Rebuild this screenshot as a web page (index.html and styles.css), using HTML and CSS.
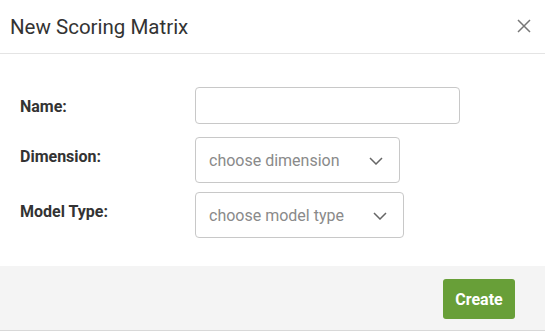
FILE: index.html
```html
<!DOCTYPE html>
<html>
<head>
<meta charset="utf-8">
<link rel="stylesheet" href="styles.css">
</head>
<body>
<div class="dialog">
  <div class="dialog-header">
    <h1 class="dialog-title">New Scoring Matrix</h1>
    <button class="close-btn" aria-label="Close">
      <svg width="14" height="14" viewBox="0 0 14 14"><path d="M1 1L13 13M13 1L1 13" stroke="#777" stroke-width="1.5" fill="none"/></svg>
    </button>
  </div>
  <div class="dialog-body">
    <div class="form-grid">
      <label class="field-label">Name:</label>
      <div class="field"><input class="text-input" type="text"></div>
      <label class="field-label">Dimension:</label>
      <div class="field">
        <div class="select">
          <span class="select-placeholder">choose dimension</span>
          <svg class="chevron" width="14" height="8" viewBox="0 0 14 8"><path d="M1 1L7 7L13 1" stroke="#666" stroke-width="1.5" fill="none"/></svg>
        </div>
      </div>
      <label class="field-label">Model Type:</label>
      <div class="field">
        <div class="select">
          <span class="select-placeholder">choose model type</span>
          <svg class="chevron" width="14" height="8" viewBox="0 0 14 8"><path d="M1 1L7 7L13 1" stroke="#666" stroke-width="1.5" fill="none"/></svg>
        </div>
      </div>
    </div>
  </div>
  <div class="dialog-footer">
    <button class="btn-create">Create</button>
  </div>
</div>
</body>
</html>
```
FILE: styles.css
```css
html, body {
  margin: 0;
  padding: 0;
  background: #fff;
}
body {
  font-family: Roboto, "Liberation Sans", sans-serif;
  color: #333;
}
.dialog {
  width: 545px;
  display: flex;
  flex-direction: column;
}
.dialog-header {
  height: 53px;
  border-bottom: 1px solid #e4e4e4;
  display: flex;
  align-items: center;
  justify-content: space-between;
  padding: 0 14px 0 10px;
}
.dialog-title {
  margin: 0;
  font-size: 20.5px;
  font-weight: 400;
  line-height: 24px;
  color: #333;
}
.close-btn {
  border: none;
  background: none;
  padding: 0;
  width: 14px;
  height: 14px;
  display: flex;
  margin-top: -1px;
}
.dialog-body {
  height: 212px;
  box-sizing: border-box;
  padding: 33px 0 0 20px;
}
.form-grid {
  display: grid;
  grid-template-columns: 175px auto;
  grid-template-rows: 37px 46px 46px;
  row-gap: 13px;
}
.form-grid > :nth-child(5),
.form-grid > :nth-child(6) {
  margin-top: -4px;
}
.field-label {
  font-size: 16px;
  font-weight: 700;
  line-height: 20px;
  color: #333;
  padding-top: 10px;
}
.field {
  display: flex;
  align-items: flex-start;
}
.text-input {
  width: 265px;
  height: 37px;
  box-sizing: border-box;
  border: 1px solid #c8c8c8;
  border-radius: 4px;
  margin: 0;
  padding: 0 12px;
  font: 16px Roboto, sans-serif;
}
.select {
  height: 46px;
  box-sizing: border-box;
  border: 1px solid #c8c8c8;
  border-radius: 4px;
  display: inline-flex;
  align-items: center;
  gap: 29px;
  padding: 0 16px 0 13px;
}
.select-placeholder {
  font-size: 16px;
  color: #8a8a8a;
}
.chevron {
  display: block;
  margin-top: 1px;
}
.dialog-footer {
  height: 65px;
  box-sizing: border-box;
  background: #f4f4f4;
  border-bottom: 1px solid #d8d8d8;
  display: flex;
  justify-content: flex-end;
  align-items: flex-start;
  padding: 13px 30px 0 0;
}
.btn-create {
  width: 72px;
  height: 40px;
  border: none;
  border-radius: 3px;
  background: #689f38;
  color: #fff;
  font: 700 16px Roboto, sans-serif;
  padding: 0;
}
```
